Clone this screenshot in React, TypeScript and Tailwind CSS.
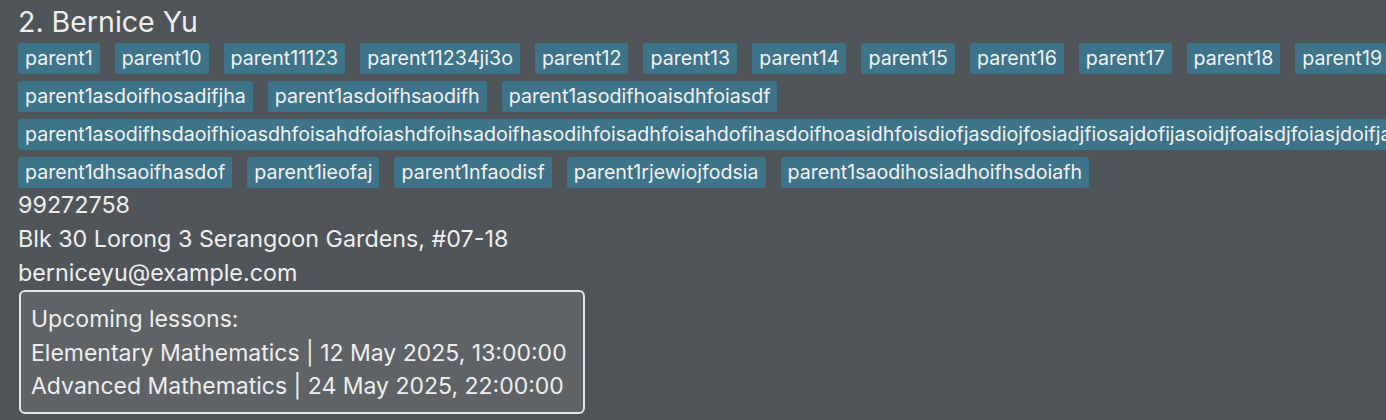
import React from 'react';

const tags = [
  'parent1',
  'parent10',
  'parent11123',
  'parent11234ji3o',
  'parent12',
  'parent13',
  'parent14',
  'parent15',
  'parent16',
  'parent17',
  'parent18',
  'parent19',
  'parent1asdoifhosadifjha',
  'parent1asdoifhsaodifh',
  'parent1asodifhoaisdhfoiasdf',
  'parent1asodifhsdaoifhioasdhfoisahdfoiashdfoihsadoifhasodihfoisadhfoisahdofihasdoifhoasidhfoisdiofjasdiojfosiadjfiosajdofijasoidjfoaisdjfoiasjdoifjaosidjfoiasjdf',
  'parent1dhsaoifhasdof',
  'parent1ieofaj',
  'parent1nfaodisf',
  'parent1rjewiojfodsia',
  'parent1saodihosiadhoifhsdoiafh',
];

export default function App() {
  return (
    <div
      className="h-[420px] w-[1386px] overflow-hidden bg-[#505559] pl-[18px] text-[#eeeeee]"
      style={{ fontFamily: 'Inter, "Noto Sans", sans-serif' }}
    >
      <div className="pt-[4px] text-[28.5px] leading-[36px]">2. Bernice Yu</div>

      <div className="mt-[3px] flex w-[1440px] flex-wrap gap-x-[15px] gap-y-[7px]">
        {tags.map((t) => (
          <span
            key={t}
            className="whitespace-nowrap rounded-[3px] bg-[#3e7489] px-[7px] text-[19.6px] leading-[31px] text-[#f2f2f2]"
          >
            {t}
          </span>
        ))}
      </div>

      <div className="text-[23.3px] leading-[34px]">
        <div>99272758</div>
        <div>Blk 30 Lorong 3 Serangoon Gardens, #07-18</div>
        <div>berniceyu@example.com</div>
      </div>

      <div className="ml-[1px] w-[566px] whitespace-nowrap rounded-[6px] border-2 border-[#e6e6e6] bg-[#5f6366] px-[10px] pt-[11px] pb-[8px] text-[23px] leading-[33.5px]">
        <div>Upcoming lessons:</div>
        <div>Elementary Mathematics | 12 May 2025, 13:00:00</div>
        <div>Advanced Mathematics | 24 May 2025, 22:00:00</div>
      </div>
    </div>
  );
}
